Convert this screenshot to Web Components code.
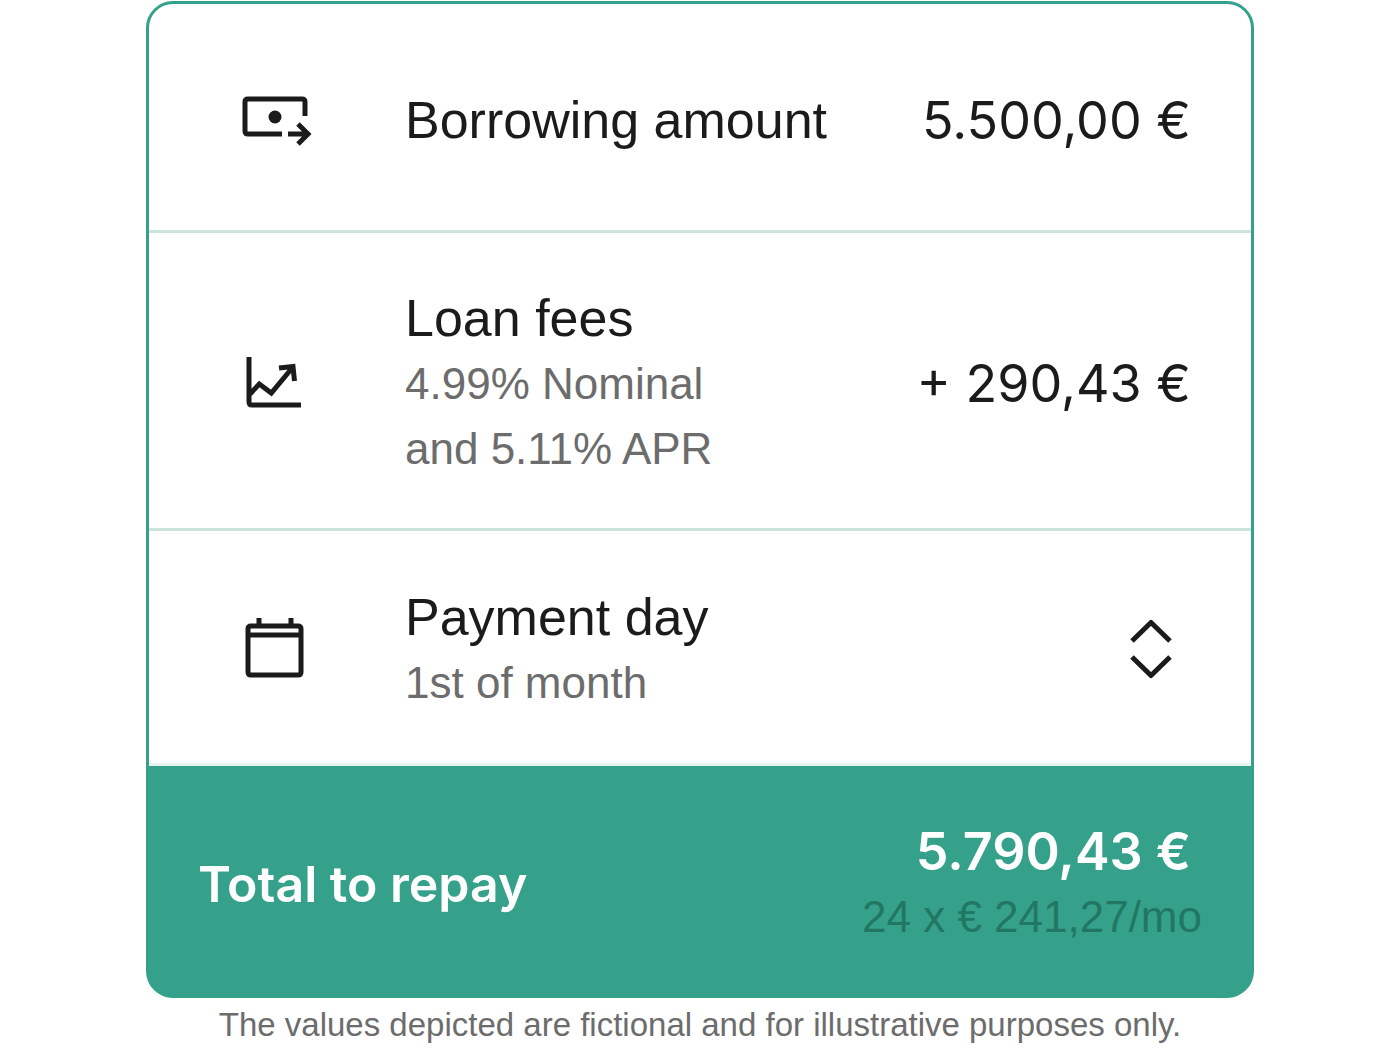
<!DOCTYPE html>
<html lang="en">
<head>
<meta charset="utf-8">
<title>Loan summary</title>
<style>
body { margin: 0; padding: 1px 24px 0; background: #fff; color: #1b1b1b; font-family: "Liberation Sans", Arial, sans-serif; }
</style>
</head>
<body>
<loan-summary>
  <loan-row>
    <loan-icon slot="icon" name="cash"></loan-icon>
    <span>Borrowing amount</span>
    <loan-amount slot="end">5.500,00 €</loan-amount>
  </loan-row>
  <loan-row>
    <loan-icon slot="icon" name="chart"></loan-icon>
    <span>Loan fees</span>
    <span slot="detail">4.99% Nominal<br>and 5.11% APR</span>
    <loan-amount slot="end">+ 290,43 €</loan-amount>
  </loan-row>
  <payment-day></payment-day>
  <loan-total>
    <span>Total to repay</span>
    <loan-amount slot="amount">5.790,43 €</loan-amount>
    <span slot="plan">24 x € 241,27/mo</span>
  </loan-total>
  <span slot="note">The values depicted are fictional and for illustrative purposes only.</span>
</loan-summary>

<script>
const define = (name, html, setup) => customElements.define(name, class extends HTMLElement {
  constructor() {
    super();
    this.attachShadow({ mode: 'open' }).innerHTML = html;
  }
  connectedCallback() { if (setup) setup(this); }
});

const icons = {
  cash: '<path d="M65 32V18Q65 15 62 15H8Q5 15 5 18V47Q5 50 8 50H42M48 50H68M58 40L68 50L58 60"/><circle cx="35" cy="33" r="6.5" fill="currentColor" stroke="none"/>',
  chart: '<path d="M9 9V54Q9 57 12 57H61M10 46L19.3 36L31.3 45L53 19M39 20L53 18.5L54.5 33"/>',
  calendar: '<path d="M11 12H58Q61 12 61 15V58Q61 61 58 61H11Q8 61 8 58V15Q8 12 11 12ZM8 21H61M19 4V12M51 4V12"/>',
  updown: '<path stroke-linejoin="round" d="M21 27L40 8.5L59 27M21 43L40 61.5L59 43"/>'
};

define('loan-icon', `
  <style>
    :host { display: block; }
    svg { display: block; height: 72px; fill: none; stroke: currentColor; stroke-width: 5; }
  </style>
  <svg aria-hidden="true"></svg>`, el => {
  const name = el.getAttribute('name');
  const svg = el.shadowRoot.querySelector('svg');
  svg.setAttribute('viewBox', name === 'updown' ? '0 0 80 72' : '0 0 72 72');
  svg.innerHTML = icons[name];
});

define('loan-amount', `
  <style>
    :host { display: block; font: var(--amount-weight, 400) 52px/65px Inter, sans-serif; white-space: nowrap; }
  </style>
  <slot></slot>`);

const rowStyle = `
  :host { display: flex; align-items: center; box-sizing: border-box; min-height: 229px; padding: 53px 60px 47px 91px; background: #fff; border-bottom: 3px solid #cbe4dc; }
  .icon { flex: none; width: 72px; margin-right: 93px; }
  .text { flex: 1; min-width: 0; }
  .title { display: block; font-size: 52px; line-height: 65px; }
  .detail { display: block; font-size: 44px; line-height: 65px; color: #6c6c6c; }`;

define('loan-row', `
  <style>${rowStyle}</style>
  <div class="icon"><slot name="icon"></slot></div>
  <div class="text">
    <div class="title"><slot></slot></div>
    <div class="detail"><slot name="detail"></slot></div>
  </div>
  <slot name="end"></slot>`);

define('payment-day', `
  <style>${rowStyle}
    :host { min-height: 235px; border-bottom-color: #e6f2ee; }
    select { appearance: none; width: 100%; height: 65px; margin: 0; padding: 0; border: 0; background: none; font-family: inherit; cursor: pointer; }
  </style>
  <div class="icon"><loan-icon name="calendar"></loan-icon></div>
  <div class="text">
    <label class="title" for="day">Payment day</label>
    <select class="detail" id="day"><option>1st of month</option></select>
  </div>
  <loan-icon name="updown"></loan-icon>`);

define('loan-total', `
  <style>
    :host { display: flex; align-items: center; justify-content: space-between; padding: 53px 49px 46px; color: #fff; --amount-weight: 600; }
    .title { font: 600 50px/65px Inter, sans-serif; }
    .sum { text-align: right; }
    .amount { padding-right: 11px; }
    .plan { font-size: 44px; line-height: 65px; color: #217763; }
  </style>
  <div class="title"><slot></slot></div>
  <div class="sum">
    <div class="amount"><slot name="amount"></slot></div>
    <div class="plan"><slot name="plan"></slot></div>
  </div>`);

define('loan-summary', `
  <style>
    :host { display: block; max-width: 1108px; margin: 0 auto; }
    .card { border: 3px solid #36a18a; border-radius: 27px; background: #36a18a; overflow: hidden; }
    .note { margin: 7px 0 0; text-align: center; font-size: 33px; line-height: 40px; color: #6c6c6c; }
  </style>
  <section class="card"><slot></slot></section>
  <p class="note"><slot name="note"></slot></p>`);
</script>
</body>
</html>
